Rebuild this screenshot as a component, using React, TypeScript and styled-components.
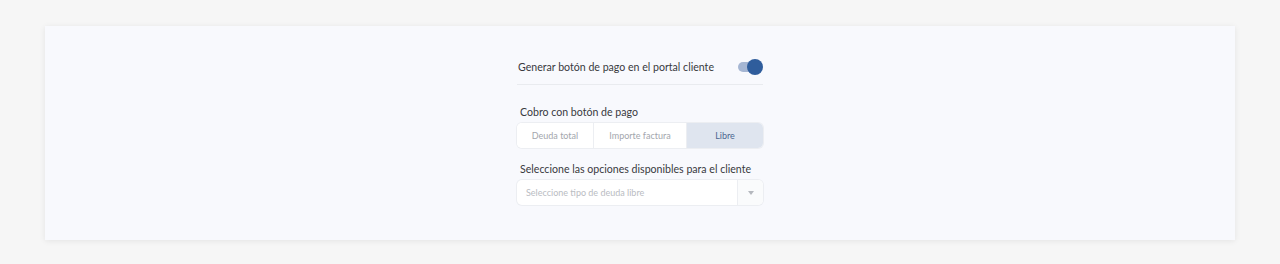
import styled, { createGlobalStyle } from 'styled-components';
import { useState } from 'react';

const GlobalStyle = createGlobalStyle`
  body {
    margin: 0;
    background: #f6f6f6;
    font-family: Lato, "Open Sans", sans-serif;
  }
`;

const Page = styled.div`
  padding: 26px 45px 24px;
`;

const Card = styled.div`
  background: #f8f9fd;
  box-shadow: 0 1px 6px rgba(0, 0, 0, 0.08);
  height: 214px;
  display: flex;
  justify-content: center;
`;

const Column = styled.div`
  width: 246px;
  padding-top: 31px;
  display: flex;
  flex-direction: column;
`;

const ToggleRow = styled.div`
  display: flex;
  align-items: center;
  justify-content: space-between;
  height: 20px;
  padding: 0 1px 7px 1px;
  border-bottom: 1px solid #e9ebef;
`;

const Label = styled.span`
  font-size: 10.6px;
  color: #383a3e;
  white-space: nowrap;
`;

const Switch = styled.button<{ $on: boolean }>`
  position: relative;
  width: 24px;
  height: 16px;
  padding: 0;
  border: 0;
  background: transparent;
  cursor: pointer;

  &::before {
    content: '';
    position: absolute;
    left: 0;
    top: 3px;
    width: 22px;
    height: 10px;
    border-radius: 5px;
    background: ${(p) => (p.$on ? '#a5b6d3' : '#d5d9e0')};
  }

  &::after {
    content: '';
    position: absolute;
    top: 0;
    left: ${(p) => (p.$on ? '9px' : '-1px')};
    width: 16px;
    height: 16px;
    border-radius: 50%;
    background: ${(p) => (p.$on ? '#2f5d9c' : '#fff')};
  }
`;

const Section = styled.div<{ $top: number }>`
  margin-top: ${(p) => p.$top}px;
  display: flex;
  flex-direction: column;
  gap: 4px;
`;

const SectionLabel = styled(Label)`
  padding-left: 3px;
  line-height: 14px;
`;

const Segmented = styled.div`
  display: flex;
  height: 25px;
  border-radius: 5px;
  overflow: hidden;
  background: #fff;
  box-shadow: 0 0 0 1px #eceef2;
`;

const Segment = styled.button<{ $w: number; $active: boolean }>`
  width: ${(p) => p.$w}px;
  border: 0;
  border-left: 1px solid #eceef2;
  background: ${(p) => (p.$active ? '#dfe5ef' : '#fff')};
  color: ${(p) => (p.$active ? '#4c6690' : '#a3a6ad')};
  font-family: inherit;
  font-size: 9px;
  padding: 0;
  cursor: pointer;

  &:first-child {
    border-left: 0;
  }
`;

const Select = styled.div`
  display: flex;
  height: 25px;
  border-radius: 5px;
  background: #fff;
  box-shadow: 0 0 0 1px #eceef2;
  overflow: hidden;
`;

const Placeholder = styled.div`
  flex: 1;
  display: flex;
  align-items: center;
  padding-left: 9px;
  font-size: 9px;
  color: #b9bcc2;
`;

const Arrow = styled.div`
  width: 25px;
  border-left: 1px solid #eceef2;
  background: #fafbfc;
  display: flex;
  align-items: center;
  justify-content: center;

  &::after {
    content: '';
    border-left: 3.5px solid transparent;
    border-right: 3.5px solid transparent;
    border-top: 4px solid #b5b8be;
    margin-top: 1px;
  }
`;

const options = [
  { label: 'Deuda total', w: 76 },
  { label: 'Importe factura', w: 93 },
  { label: 'Libre', w: 77 },
];

export default function App() {
  const [on, setOn] = useState(true);
  const [mode, setMode] = useState('Libre');

  return (
    <>
      <GlobalStyle />
      <Page>
        <Card>
          <Column>
            <ToggleRow>
              <Label>Generar botón de pago en el portal cliente</Label>
              <Switch $on={on} onClick={() => setOn(!on)} aria-label="toggle" />
            </ToggleRow>
            <Section $top={20}>
              <SectionLabel>Cobro con botón de pago</SectionLabel>
              <Segmented>
                {options.map((o) => (
                  <Segment
                    key={o.label}
                    $w={o.w}
                    $active={mode === o.label}
                    onClick={() => setMode(o.label)}
                  >
                    {o.label}
                  </Segment>
                ))}
              </Segmented>
            </Section>
            <Section $top={14}>
              <SectionLabel>Seleccione las opciones disponibles para el cliente</SectionLabel>
              <Select>
                <Placeholder>Seleccione tipo de deuda libre</Placeholder>
                <Arrow />
              </Select>
            </Section>
          </Column>
        </Card>
      </Page>
    </>
  );
}
